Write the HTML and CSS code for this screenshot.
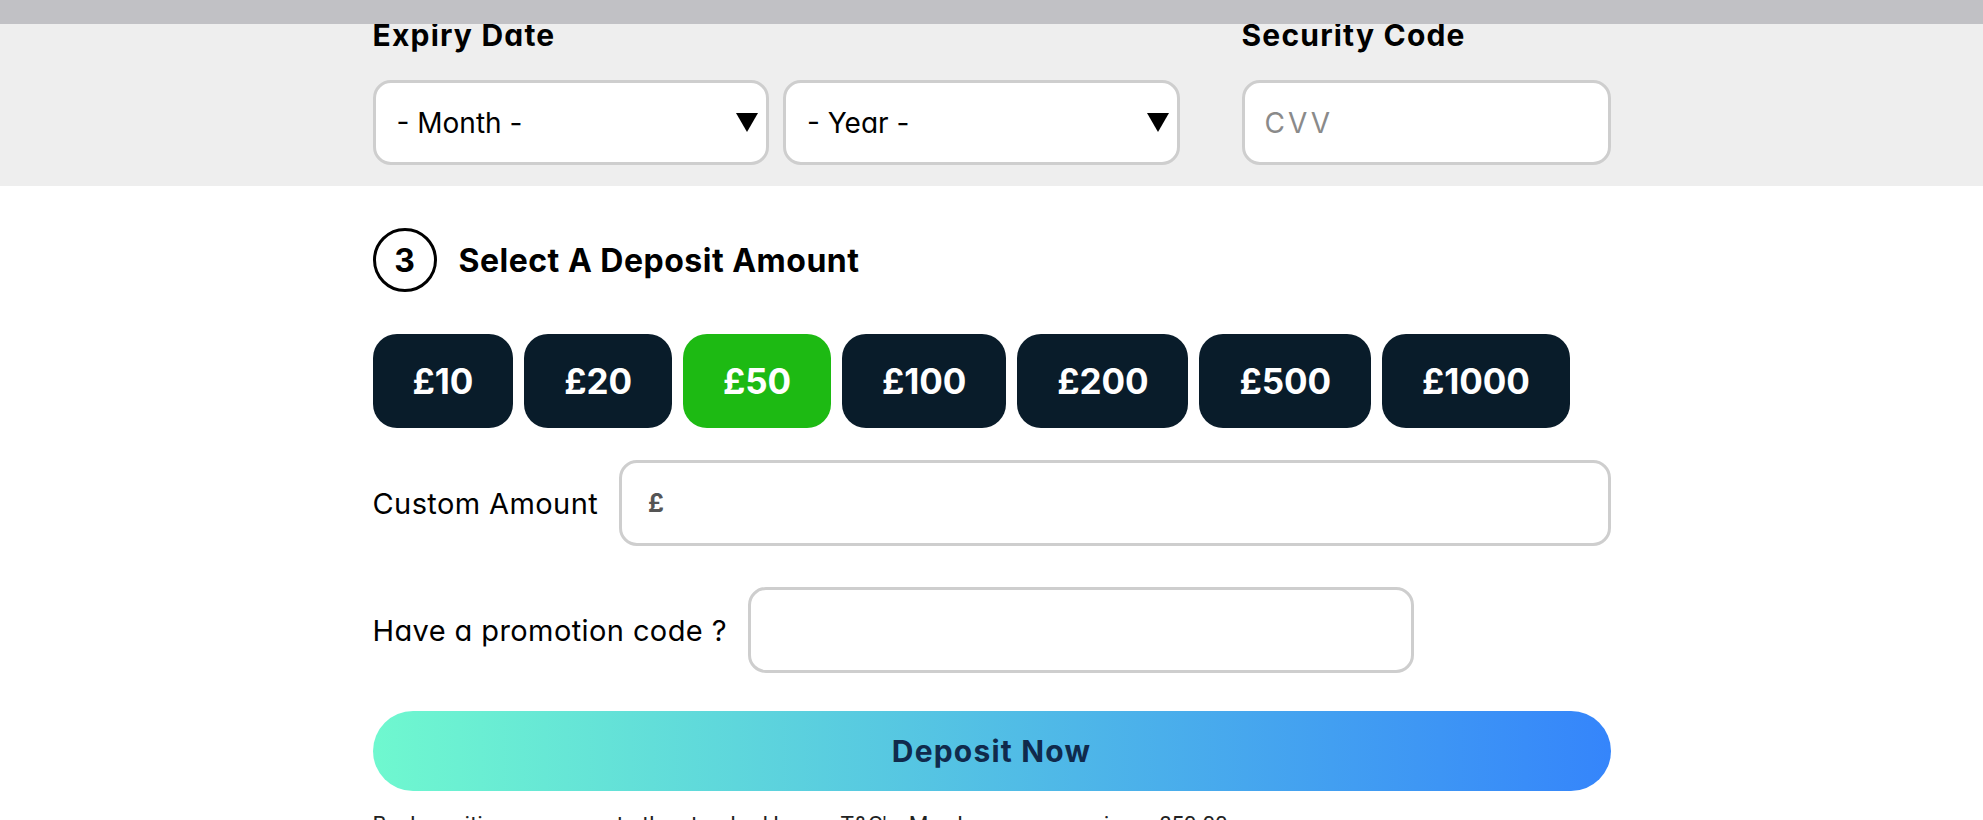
FILE: index.html
```html
<!DOCTYPE html>
<html lang="en">
<head>
<meta charset="utf-8">
<title>Deposit</title>
<link rel="stylesheet" href="styles.css">
</head>
<body>
<header class="topbar"></header>

<section class="card-band">
  <div class="container card-grid">
    <div class="field">
      <div class="field-label">Expiry Date</div>
      <div class="select-pair">
        <div class="select"><span>- Month -</span><span class="caret"></span></div>
        <div class="select"><span>- Year -</span><span class="caret"></span></div>
      </div>
    </div>
    <div class="field">
      <div class="field-label">Security Code</div>
      <div class="text-input"><span class="placeholder">CVV</span></div>
    </div>
  </div>
</section>

<main class="container deposit">
  <div class="step-head">
    <span class="step-num">3</span>
    <h2 class="step-title">Select A Deposit Amount</h2>
  </div>

  <div class="amounts">
    <button class="amount">£10</button>
    <button class="amount">£20</button>
    <button class="amount active">£50</button>
    <button class="amount">£100</button>
    <button class="amount">£200</button>
    <button class="amount">£500</button>
    <button class="amount">£1000</button>
  </div>

  <div class="form-row">
    <span class="row-label">Custom Amount</span>
    <div class="text-input custom-input"><span class="currency">£</span></div>
  </div>

  <div class="form-row promo-row">
    <span class="row-label">Have a promotion code ?</span>
    <div class="text-input promo-input"></div>
  </div>

  <button class="deposit-btn">Deposit Now</button>

  <p class="terms">By depositing you agree to the standard bonus T&amp;C's. Max bonus conversion = £50.00</p>
</main>
</body>
</html>
```

FILE: styles.css
```css
* { box-sizing: border-box; }

html, body {
  margin: 0;
  padding: 0;
  background: #ffffff;
  color: #000000;
  font-family: "Inter", "Noto Sans", sans-serif;
  font-feature-settings: "cv11";
  overflow: hidden;
}

.topbar {
  position: fixed;
  top: 0;
  left: 0;
  right: 0;
  height: 24px;
  background: #c1c1c5;
  z-index: 5;
}

.container {
  width: 1238px;
  margin: 0 auto;
}

/* ---------- card band ---------- */
.card-band {
  background: #eeeeee;
  padding: 21px 0 21px;
}

.card-grid {
  display: grid;
  grid-template-columns: 807px 369px;
  column-gap: 62px;
}

.field-label {
  font-weight: 700;
  font-size: 30px;
  line-height: 28px;
  letter-spacing: 1.2px;
  margin-bottom: 31px;
}

.select-pair {
  display: grid;
  grid-template-columns: 1fr 1fr;
  column-gap: 14px;
}

.select,
.text-input {
  height: 85px;
  background: #ffffff;
  border: 3px solid #cecece;
  border-radius: 18px;
  display: flex;
  align-items: center;
}

.select {
  justify-content: space-between;
  padding: 0 8px 0 21px;
  font-size: 28px;
  color: #000;
}

.caret {
  width: 0;
  height: 0;
  border-left: 11px solid transparent;
  border-right: 11px solid transparent;
  border-top: 19px solid #000;
}

.text-input {
  padding: 0 20px;
}

.placeholder {
  font-size: 28px;
  letter-spacing: 3px;
  color: #8a8a8a;
}

/* ---------- deposit section ---------- */
.deposit {
  padding-top: 42px;
}

.step-head {
  display: flex;
  align-items: center;
  gap: 22px;
}

.step-num {
  width: 64px;
  height: 64px;
  border: 3px solid #000;
  border-radius: 50%;
  display: flex;
  align-items: center;
  justify-content: center;
  font-weight: 700;
  font-size: 32px;
}

.step-title {
  margin: 0;
  font-weight: 700;
  font-size: 32px;
  letter-spacing: 0.5px;
}

.amounts {
  display: flex;
  gap: 11px;
  margin-top: 42px;
}

.amount {
  height: 94px;
  padding: 0 40px;
  border: none;
  border-radius: 24px;
  background: #091c2a;
  color: #ffffff;
  font-family: inherit;
  font-weight: 700;
  font-size: 35px;
  letter-spacing: -0.1px;
}

.amount.active {
  background: #1dba13;
}

.form-row {
  display: flex;
  align-items: center;
  gap: 21px;
  margin-top: 32px;
}

.promo-row {
  margin-top: 41px;
}

.row-label {
  font-size: 29px;
  letter-spacing: 0.4px;
  color: #000;
  white-space: nowrap;
}

.custom-input {
  flex: 1;
  height: 86px;
  padding-left: 26px;
}

.currency {
  font-weight: 700;
  font-size: 25px;
  color: #555555;
}

.promo-input {
  width: 666px;
  height: 86px;
}

.deposit-btn {
  display: block;
  width: 100%;
  height: 80px;
  margin-top: 38px;
  border: none;
  border-radius: 40px;
  background: linear-gradient(to right, #6ff8cf, #3585fb);
  color: #102a4c;
  font-family: inherit;
  font-weight: 700;
  font-size: 30px;
  letter-spacing: 1.2px;
}

.terms {
  margin: 20px 0 0;
  font-family: "Roboto", "Liberation Sans", sans-serif;
  font-size: 22.5px;
  line-height: 26px;
  color: #222222;
}
```
